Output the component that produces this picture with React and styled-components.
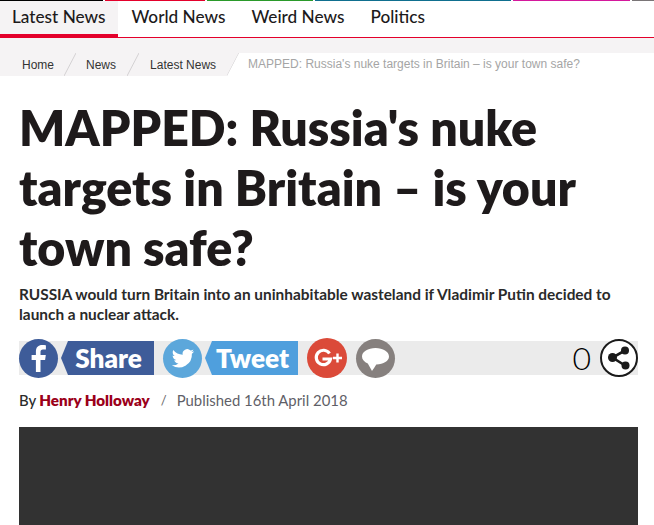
import React from 'react';
import styled, { createGlobalStyle } from 'styled-components';

const Global = createGlobalStyle`
  html, body { margin: 0; padding: 0; background: #fff; }
  body { font-family: Lato, "Liberation Sans", sans-serif; color: #1e1e1e; overflow: hidden; }
`;
const Page = styled.div`width: 654px; height: 525px; overflow: hidden;`;
const Strip = styled.div`display: flex; gap: 2px; height: 1px;`;
const StripPart = styled.div`height: 1px; flex: none; width: ${p => p.$w}px; background: ${p => p.$c};`;
const Nav = styled.nav`display: flex; height: 36px; border-bottom: 1px solid #e4002b;`;
const NavItem = styled.a`
  display: flex; align-items: center; height: 36px; box-sizing: border-box;
  padding: 0 13px 1px ${p => p.$active ? 12 : 13}px; font-size: 17.2px; line-height: 1; font-weight: 500; color: #1c1a1b;
  background: ${p => p.$active ? '#f5f3f4' : '#fff'};
  border-bottom: 3px solid ${p => p.$active ? '#e4002b' : 'transparent'};
`;
const CrumbBand = styled.div`box-sizing: border-box; background: #f5f3f4; padding-top: 15px; height: 38px;`;
const Crumbs = styled.div`display: flex; align-items: center; height: 23px; padding-left: 22px; font-family: "Liberation Sans", Arial, sans-serif; font-size: 12px;`;
const Crumb = styled.span`color: #333;`;
const CurrentCrumb = styled.span`
  flex: 1; height: 23px; line-height: 23px; margin-left: -12px; padding-left: 21px; color: #a5a5a5; background: #fff;
  clip-path: polygon(12px 0, 100% 0, 100% 100%, 0 100%);
`;
const Slash = styled.svg`width: 12px; height: 23px; margin: 0 ${p => p.$gap}px; flex: none;`;
const LastSlash = styled(Slash)`margin: 0 0 0 11px;`;
const Main = styled.main`padding: 0 16px 0 19px;`;
const Title = styled.h1`margin: 21px 0 0; font-size: 48.3px; line-height: 60px; font-weight: 800; color: #1e1a1b;`;
const Lead = styled.p`margin: 7px 0 0; font-size: 15.4px; line-height: 20px; font-weight: 700; color: #2a2a2a;`;
const ShareBar = styled.div`display: flex; align-items: center; height: 34px; margin-top: 17px; background: #ebebeb;`;
const Disc = styled.span`
  flex: none; width: ${p => p.$s || 39}px; height: ${p => p.$s || 39}px; border-radius: 50%; background: ${p => p.$c};
  display: flex; align-items: center; justify-content: center; margin: -3px ${p => p.$mr || 0}px -3px 0;
`;
const Tag = styled.span`
  flex: none; display: flex; align-items: center; justify-content: center; height: 34px; width: 93px;
  margin: 0 9px 0 3px; padding-left: 2px; box-sizing: border-box; background: ${p => p.$c}; color: #fff; font-size: 26.2px; font-weight: 800;
  clip-path: polygon(7px 0, 100% 0, 100% 100%, 7px 100%, 0 50%);
`;
const Spacer = styled.span`flex: 1;`;
const Count = styled.span`font-size: 32px; font-weight: 300; color: #000; margin-right: 9px; line-height: 34px;`;
const ShareCircle = styled.span`
  flex: none; width: 38px; height: 38px; margin: -2px 0; border: 2px solid #1a1a1a; border-radius: 50%; box-sizing: border-box; background: #fff;
  display: flex; align-items: center; justify-content: center;
`;
const Byline = styled.div`display: flex; align-items: center; margin-top: 15px; font-size: 14.9px; line-height: 20px; color: #333;`;
const By = styled.span`font-weight: 500; color: #2a2a2a;`;
const Author = styled.a`color: #9b0019; font-weight: 800; font-size: 15.2px; margin-left: 3px;`;
const Sep = styled.span`color: #666; margin: 0 10px 0 11px; font-size: 13px;`;
const Pub = styled.span`color: #5f5f68;`;
const Video = styled.div`margin-top: 17px; height: 120px; background: #323232;`;

const SLASH = "M0 23 L12 0";
const SlashIcon = ({ gap }) => (
  <Slash $gap={gap} viewBox="0 0 12 23"><path d={SLASH} stroke="#d4d2d3" strokeWidth="1" fill="none" /></Slash>
);

export default function App() {
  return (
    <Page>
      <Global />
      <Strip>
        <StripPart $w={103} $c="#000" />
        <StripPart $w={100} $c="#e4002b" />
        <StripPart $w={106} $c="#2a9a2a" />
        <StripPart $w={196} $c="#0f6f8f" />
        <StripPart $w={117} $c="#d4189c" />
        <StripPart $w={24} $c="#7a7577" />
      </Strip>
      <Nav>
        <NavItem $active>Latest News</NavItem>
        <NavItem>World News</NavItem>
        <NavItem>Weird News</NavItem>
        <NavItem>Politics</NavItem>
      </Nav>
      <CrumbBand>
        <Crumbs>
          <Crumb>Home</Crumb><SlashIcon gap={10} />
          <Crumb>News</Crumb><SlashIcon gap={11} />
          <Crumb>Latest News</Crumb>
          <LastSlash viewBox="0 0 12 23"><path d={SLASH} stroke="#d4d2d3" strokeWidth="1" fill="none" /></LastSlash>
          <CurrentCrumb>MAPPED: Russia's nuke targets in Britain – is your town safe?</CurrentCrumb>
        </Crumbs>
      </CrumbBand>
      <Main>
        <Title>MAPPED: Russia's nuke targets in Britain – is your town safe?</Title>
        <Lead>RUSSIA would turn Britain into an uninhabitable wasteland if Vladimir Putin decided to launch a nuclear attack.</Lead>
        <ShareBar>
          <Disc $c="#3e5c99">
            <svg width="39" height="39" viewBox="0 0 39 39"><path fill="#fff" d="M21.500 33V21h4.600l.7-5h-5.300v-3c0-1.500.6-2.400 2.500-2.400h2.900V6.200c-.8-.1-2.200-.2-3.700-.2-3.900 0-6.300 2.300-6.300 6.500V16h-4.300v5h4.300v12z"/></svg>
          </Disc>
          <Tag $c="#3e5c99">Share</Tag>
          <Disc $c="#5ca7db">
            <svg width="24" height="24" viewBox="0 0 24 24"><path fill="#fff" d="M23 5.200c-.8.400-1.700.6-2.600.7.900-.6 1.700-1.400 2-2.500-.9.500-1.900.9-2.900 1.100A4.600 4.600 0 0 0 11.700 8.700C7.900 8.500 4.500 6.700 2.300 3.900c-1.200 2.100-.6 4.800 1.400 6.100-.7 0-1.400-.2-2.100-.6 0 2.200 1.600 4.200 3.700 4.700-.7.200-1.400.2-2.100.1.600 1.900 2.300 3.200 4.300 3.200A9.300 9.300 0 0 1 .8 19.300 13 13 0 0 0 20.900 7.700c.9-.6 1.600-1.400 2.100-2.500z"/></svg>
          </Disc>
          <Tag $c="#4f9fdd">Tweet</Tag>
          <Disc $c="#db4a39" $s={40} $mr={9}>
            <svg width="31" height="20" viewBox="0 0 31 20"><path fill="none" stroke="#fff" strokeWidth="3.200" d="M17.500 5.500A7.200 7.200 0 1 0 18.500 11H10.500"/><path stroke="#fff" strokeWidth="2.400" d="M21 10h9M25.500 5.500v9"/></svg>
          </Disc>
          <Disc $c="#86807e">
            <svg width="29" height="27" viewBox="0 0 29 27"><path fill="#fff" d="M14.500 3C7 3 1 6.600 1 11.500c0 3 2.300 5.600 5.800 7.100L11 26c1.500-2 3.500-5 4.300-6.500C22.600 19.300 28 16 28 11.500 28 6.600 22 3 14.500 3z"/></svg>
          </Disc>
          <Spacer />
          <Count>0</Count>
          <ShareCircle>
            <svg width="26" height="26" viewBox="0 0 26 26"><path stroke="#1a1a1a" strokeWidth="2.600" fill="none" d="M19 5.500 6.500 12.500 19 20.500"/><circle cx="19" cy="5.500" r="4" fill="#1a1a1a"/><circle cx="6.500" cy="12.500" r="4.500" fill="#1a1a1a"/><circle cx="19.500" cy="20.500" r="4" fill="#1a1a1a"/></svg>
          </ShareCircle>
        </ShareBar>
        <Byline>
          <By>By</By><Author>Henry Holloway</Author><Sep>/</Sep><Pub>Published 16th April 2018</Pub>
        </Byline>
        <Video />
      </Main>
    </Page>
  );
}
